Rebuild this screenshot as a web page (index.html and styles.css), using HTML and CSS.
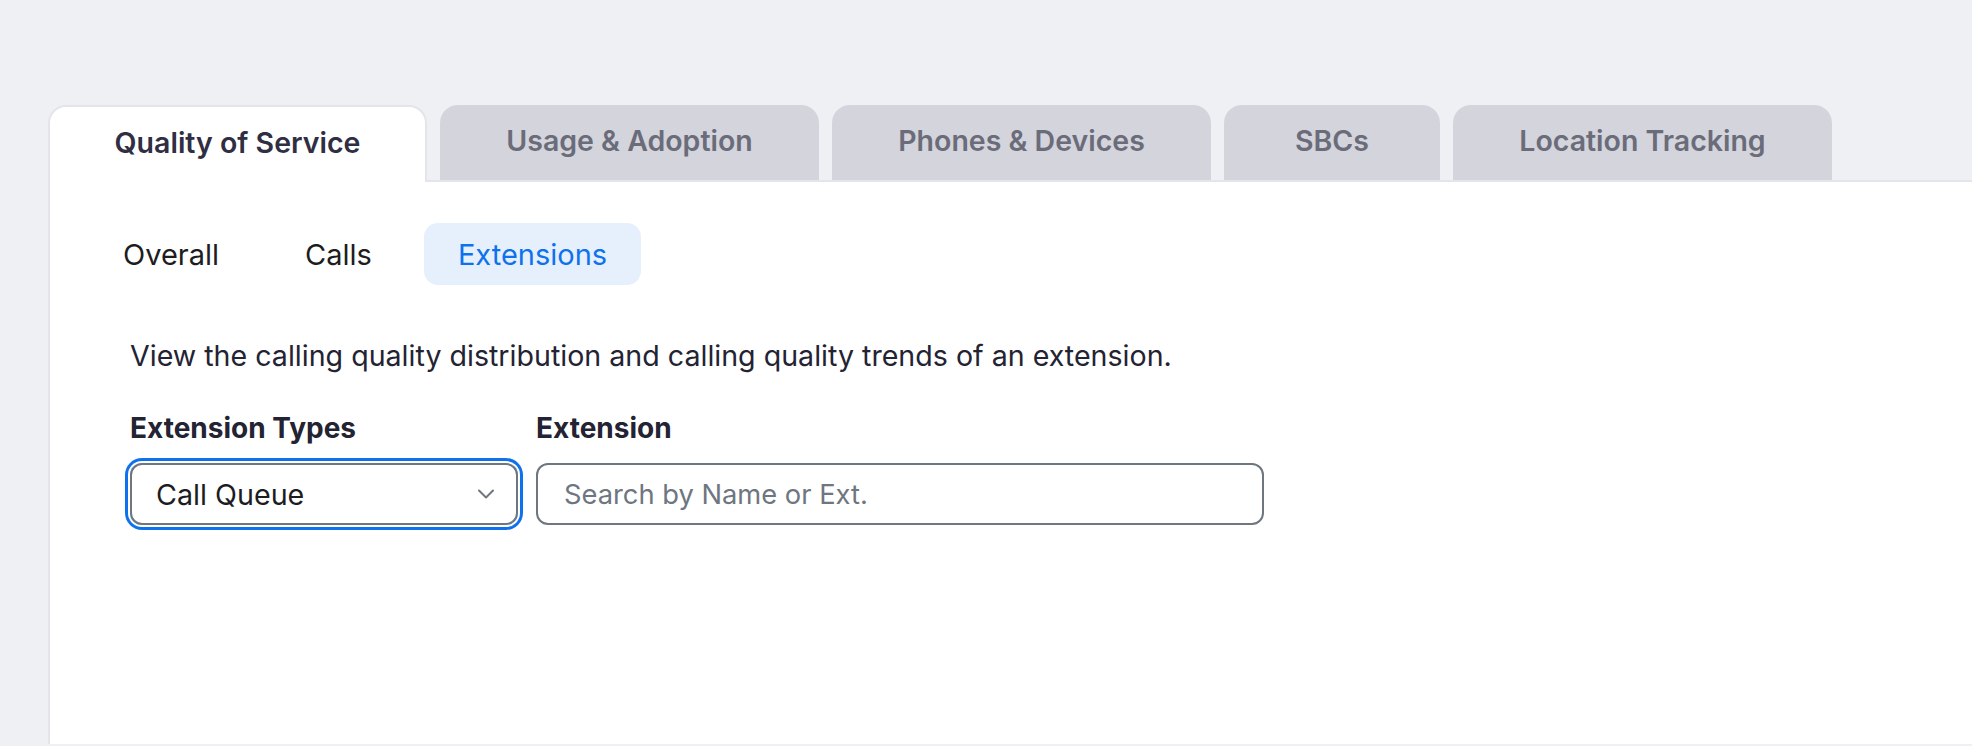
FILE: index.html
```html
<!DOCTYPE html>
<html lang="en">
<head>
<meta charset="utf-8">
<title>Quality of Service</title>
<link rel="stylesheet" href="styles.css">
</head>
<body>
<div class="page">
  <div class="tabs">
    <div class="tab active">Quality of Service</div>
    <div class="tab">Usage &amp; Adoption</div>
    <div class="tab">Phones &amp; Devices</div>
    <div class="tab tab-sm">SBCs</div>
    <div class="tab">Location Tracking</div>
  </div>
  <div class="panel">
    <div class="subtabs">
      <div class="subtab">Overall</div>
      <div class="subtab">Calls</div>
      <div class="subtab selected">Extensions</div>
    </div>
    <div class="body">
      <p class="desc">View the calling quality distribution and calling quality trends of an extension.</p>
      <div class="fields">
        <div class="field">
          <div class="label">Extension Types</div>
          <div class="select">
            <span>Call Queue</span>
            <svg class="chev" width="18" height="10" viewBox="0 0 18 10"><path d="M2 1.5 L9 8.5 L16 1.5" fill="none" stroke="#6e7680" stroke-width="2" stroke-linecap="round" stroke-linejoin="round"/></svg>
          </div>
        </div>
        <div class="field">
          <div class="label">Extension</div>
          <div class="input"><span class="ph">Search by Name or Ext.</span></div>
        </div>
      </div>
    </div>
  </div>
</div>
</body>
</html>
```
FILE: styles.css
```css
html, body {
  margin: 0;
  padding: 0;
  background: #eff0f3;
  font-family: Inter, "Noto Sans", sans-serif;
  -webkit-font-smoothing: antialiased;
}
.page {
  padding-top: 105px;
}
.tabs {
  display: flex;
  align-items: flex-end;
  gap: 13px;
  padding-left: 48px;
}
.tab {
  position: relative;
  box-sizing: border-box;
  width: 379px;
  height: 75px;
  padding-bottom: 4px;
  display: flex;
  align-items: center;
  justify-content: center;
  background: #d3d4dc;
  color: #6b6c7a;
  font-size: 28.5px;
  font-weight: 600;
  border-radius: 18px 18px 0 0;
}
.tab-sm {
  width: 216px;
}
.tab.active {
  background: #ffffff;
  color: #2f2e42;
  border: 2px solid #e4e5ea;
  border-bottom: none;
  height: 77px;
  margin-bottom: -2px;
  padding-bottom: 5px;
}
.panel {
  background: #ffffff;
  border-top: 2px solid #e4e5ea;
  border-left: 2px solid #e4e5ea;
  margin-left: 48px;
  height: 564px;
  box-sizing: border-box;
  padding: 41px 0 0 39px;
}
.subtabs {
  display: flex;
  gap: 18px;
}
.subtab {
  height: 62px;
  padding: 0 34px;
  display: flex;
  align-items: center;
  font-size: 29px;
  color: #1d1d1f;
  border-radius: 14px;
}
.subtab.selected {
  background: #e6f0fd;
  color: #0e72ed;
}
.body {
  padding-left: 41px;
}
.desc {
  margin: 55px 0 0 0;
  font-size: 28.6px;
  line-height: 32px;
  color: #232333;
}
.fields {
  display: flex;
  gap: 18px;
  margin-top: 40px;
}
.label {
  font-size: 28px;
  font-weight: 700;
  color: #232333;
  line-height: 32px;
  margin-bottom: 19px;
}
.select {
  box-sizing: border-box;
  width: 388px;
  height: 62px;
  border: 2px solid #6e7680;
  border-radius: 12px;
  display: flex;
  align-items: center;
  justify-content: space-between;
  padding: 0 21px 0 24px;
  font-size: 28.7px;
  color: #1d1d1f;
  box-shadow: 0 0 0 2px #ffffff, 0 0 0 5px #0e72ed;
}
.chev {
  display: block;
}
.input {
  box-sizing: border-box;
  width: 728px;
  height: 62px;
  border: 2px solid #6e7680;
  border-radius: 12px;
  display: flex;
  align-items: center;
  padding: 0 26px;
  font-size: 27.3px;
}
.ph {
  color: #6e7680;
}
```
